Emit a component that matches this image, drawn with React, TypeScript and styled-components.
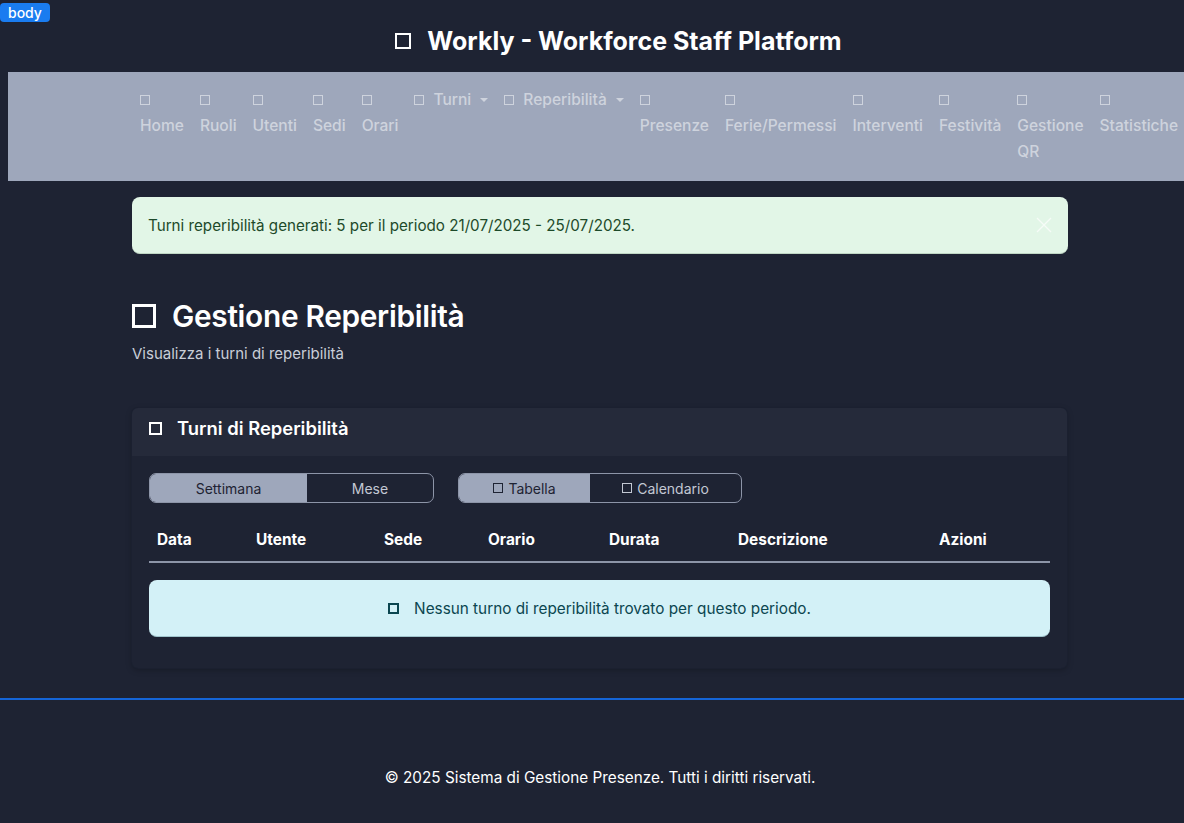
import React from 'react';
import styled, { createGlobalStyle } from 'styled-components';

const GlobalStyle = createGlobalStyle`
  html, body {
    margin: 0;
    padding: 0;
    background: #1e2333;
    overflow-x: hidden;
  }
  body {
    font-family: Inter, "Noto Sans", "Liberation Sans", sans-serif;
    color: #ffffff;
  }
`;

const Page = styled.div`
  position: relative;
  min-height: 823px;
  display: flex;
  flex-direction: column;
`;

const DebugBadge = styled.span`
  position: absolute;
  left: 0;
  top: 3px;
  height: 19px;
  padding: 0 8px;
  background: #1a7cf0;
  color: #fff;
  border-radius: 4px;
  font-size: 14px;
  line-height: 19px;
  font-weight: 500;
`;

const Box = styled.span<{ $size: number; $stroke: number }>`
  display: inline-block;
  flex: none;
  width: ${(p) => p.$size}px;
  height: ${(p) => p.$size}px;
  border: ${(p) => p.$stroke}px solid currentColor;
  box-sizing: border-box;
`;

const Header = styled.header`
  height: 72px;
  display: flex;
  align-items: center;
  justify-content: center;
  padding-left: 53px;
  padding-top: 10px;
  box-sizing: border-box;
`;

const Title = styled.h1`
  margin: 0;
  display: flex;
  align-items: center;
  gap: 16px;
  font-size: 25px;
  font-weight: 700;
  letter-spacing: 0;
`;

const Nav = styled.nav`
  margin-left: 8px;
  width: 1240px;
  background: #9ea7bb;
  display: flex;
  align-items: flex-start;
  padding: 15px 0 16px 124px;
  box-sizing: border-box;
`;

const NavItem = styled.a<{ $inline?: boolean }>`
  display: flex;
  flex-direction: ${(p) => (p.$inline ? 'row' : 'column')};
  align-items: ${(p) => (p.$inline ? 'center' : 'flex-start')};
  gap: ${(p) => (p.$inline ? '9px' : '0')};
  padding: 0 8px;
  color: #ced3dd;
  font-size: 15.55px;
  line-height: 26px;
  font-weight: 500;
  text-decoration: none;
  white-space: nowrap;
`;

const NavIconLine = styled.span`
  height: 26px;
  display: flex;
  align-items: center;
`;

const Caret = styled.span`
  display: inline-block;
  width: 0;
  height: 0;
  border-left: 4px solid transparent;
  border-right: 4px solid transparent;
  border-top: 4px solid currentColor;
`;

const Main = styled.main`
  width: 936px;
  margin: 16px 0 0 132px;
`;

const SuccessAlert = styled.div`
  height: 57px;
  box-sizing: border-box;
  display: flex;
  align-items: center;
  justify-content: space-between;
  padding: 0 16px;
  background: #e2f6e7;
  border-bottom: 1px solid #bfd6c4;
  border-radius: 8px;
  color: #1d4a2a;
  font-size: 15.2px;
`;

const CloseButton = styled.button`
  border: 0;
  background: none;
  padding: 0;
  width: 16px;
  height: 16px;
  color: #ffffff;
  opacity: 0.7;
  display: flex;
`;

const PageHeading = styled.h2`
  margin: 44px 0 0;
  display: flex;
  align-items: center;
  gap: 16px;
  font-size: 29.8px;
  font-weight: 600;
  line-height: 36px;
  letter-spacing: -0.3px;
`;

const Subtitle = styled.p`
  margin: 10px 0 0;
  color: #c9ced8;
  font-size: 15px;
  line-height: 20px;
`;

const Card = styled.section`
  margin-top: 44px;
  width: 935px;
  background: #1e2333;
  border-radius: 6px;
  box-shadow: 0 0 0 1px #1b2030, 0 2px 6px rgba(0, 0, 0, 0.25);
  overflow: hidden;
`;

const CardHeader = styled.div`
  height: 48px;
  box-sizing: border-box;
  padding: 9px 17px 0;
  background: #252a3a;
`;

const CardTitle = styled.h3`
  margin: 0;
  display: flex;
  align-items: center;
  gap: 15px;
  font-size: 18.4px;
  font-weight: 600;
  line-height: 22px;
`;

const CardBody = styled.div`
  padding: 17px 17px 31px;
`;

const Toolbar = styled.div`
  display: flex;
  gap: 24px;
`;

const Segmented = styled.div`
  display: flex;
  border: 1px solid #8d95a8;
  border-radius: 7px;
  overflow: hidden;
  height: 30px;
  box-sizing: border-box;
`;

const Segment = styled.button<{ $active?: boolean; $width: number }>`
  width: ${(p) => p.$width}px;
  border: 0;
  margin: 0;
  display: flex;
  align-items: center;
  justify-content: center;
  gap: 5px;
  font-family: inherit;
  font-size: 14px;
  background: ${(p) => (p.$active ? '#9ea7bb' : 'transparent')};
  color: ${(p) => (p.$active ? '#1e2333' : '#c3c8d3')};
`;

const Table = styled.table`
  margin-top: 16px;
  width: 901px;
  table-layout: fixed;
  border-collapse: collapse;
`;

const Th = styled.th<{ $width: number }>`
  width: ${(p) => p.$width - 16}px;
  text-align: left;
  padding: 8px 8px;
  font-size: 15.4px;
  font-weight: 700;
  line-height: 26px;
  color: #ffffff;
  border-bottom: 2px solid #8d95a8;
`;

const EmptyInfo = styled.div`
  margin-top: 17px;
  width: 901px;
  height: 57px;
  box-sizing: border-box;
  display: flex;
  align-items: center;
  justify-content: center;
  gap: 15px;
  background: #d3f1f7;
  border-bottom: 1px solid #9fc4cc;
  border-radius: 8px;
  color: #0b4650;
  font-size: 15.3px;
`;

const FooterLine = styled.hr`
  margin: 30px 0 0;
  border: 0;
  height: 2px;
  background: #1565d8;
`;

const Footer = styled.footer`
  flex: 1;
  display: flex;
  justify-content: center;
  padding-top: 68px;
  padding-left: 16px;
  font-size: 15.3px;
  color: #ffffff;
`;

const navItems = ['Home', 'Ruoli', 'Utenti', 'Sedi', 'Orari'];
const navItemsAfter = ['Presenze', 'Ferie/Permessi', 'Interventi', 'Festività'];

const columns: [string, number][] = [
  ['Data', 99],
  ['Utente', 128],
  ['Sede', 104],
  ['Orario', 121],
  ['Durata', 129],
  ['Descrizione', 201],
  ['Azioni', 119],
];

const StackedLink: React.FC<{ children: React.ReactNode }> = ({ children }) => (
  <NavItem href="#">
    <NavIconLine>
      <Box $size={10} $stroke={1.5} />
    </NavIconLine>
    <span>{children}</span>
  </NavItem>
);

const DropdownLink: React.FC<{ label: string }> = ({ label }) => (
  <NavItem href="#" $inline>
    <Box $size={10} $stroke={1.5} />
    {label}
    <Caret />
  </NavItem>
);

export default function App() {
  return (
    <Page>
      <GlobalStyle />
      <DebugBadge>body</DebugBadge>

      <Header>
        <Title>
          <Box $size={16} $stroke={2} />
          Workly - Workforce Staff Platform
        </Title>
      </Header>

      <Nav>
        {navItems.map((n) => (
          <StackedLink key={n}>{n}</StackedLink>
        ))}
        <DropdownLink label="Turni" />
        <DropdownLink label="Reperibilità" />
        {navItemsAfter.map((n) => (
          <StackedLink key={n}>{n}</StackedLink>
        ))}
        <StackedLink>
          Gestione
          <br />
          QR
        </StackedLink>
        <StackedLink>Statistiche</StackedLink>
      </Nav>

      <Main>
        <SuccessAlert>
          Turni reperibilità generati: 5 per il periodo 21/07/2025 - 25/07/2025.
          <CloseButton aria-label="Chiudi">
            <svg width="16" height="16" viewBox="0 0 16 16" fill="none" stroke="currentColor" strokeWidth="1.4">
              <path d="M1 1 L15 15 M15 1 L1 15" />
            </svg>
          </CloseButton>
        </SuccessAlert>

        <PageHeading>
          <Box $size={24} $stroke={3} />
          Gestione Reperibilità
        </PageHeading>
        <Subtitle>Visualizza i turni di reperibilità</Subtitle>

        <Card>
          <CardHeader>
            <CardTitle>
              <Box $size={13} $stroke={2} />
              Turni di Reperibilità
            </CardTitle>
          </CardHeader>
          <CardBody>
            <Toolbar>
              <Segmented>
                <Segment $active $width={157}>Settimana</Segment>
                <Segment $width={126}>Mese</Segment>
              </Segmented>
              <Segmented>
                <Segment $active $width={131}>
                  <Box $size={10} $stroke={1.5} />
                  Tabella
                </Segment>
                <Segment $width={151}>
                  <Box $size={10} $stroke={1.5} />
                  Calendario
                </Segment>
              </Segmented>
            </Toolbar>

            <Table>
              <thead>
                <tr>
                  {columns.map(([c, w]) => (
                    <Th key={c} $width={w}>{c}</Th>
                  ))}
                </tr>
              </thead>
            </Table>

            <EmptyInfo>
              <Box $size={11} $stroke={2} />
              Nessun turno di reperibilità trovato per questo periodo.
            </EmptyInfo>
          </CardBody>
        </Card>
      </Main>

      <FooterLine />
      <Footer>© 2025 Sistema di Gestione Presenze. Tutti i diritti riservati.</Footer>
    </Page>
  );
}
